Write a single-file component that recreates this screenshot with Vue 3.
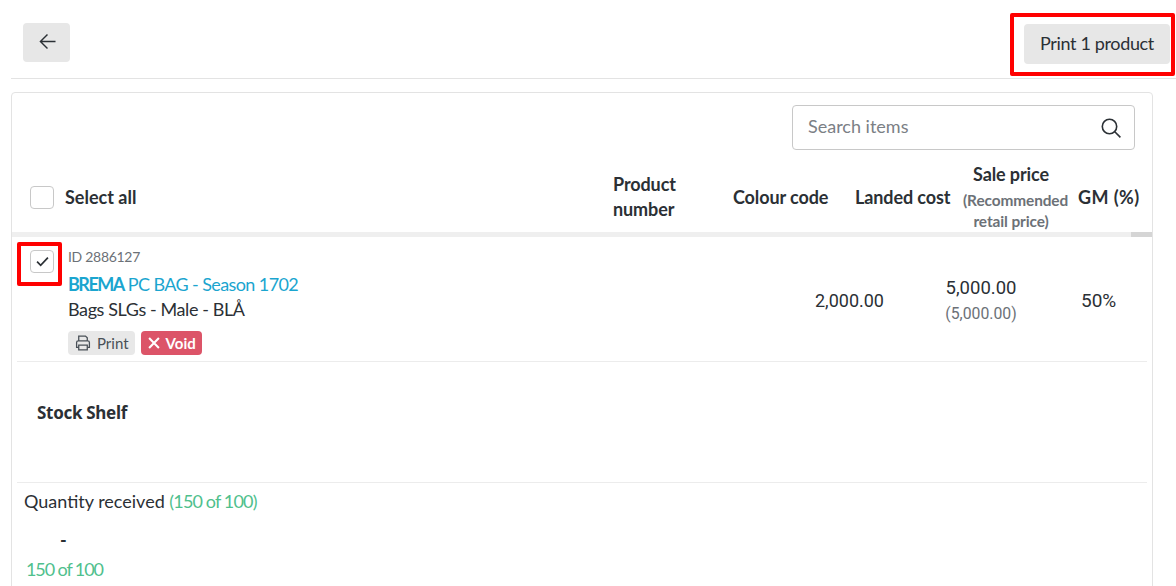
<script setup>
const columns = ['Colour code', 'Landed cost']
</script>

<template>
  <div class="page">
    <header class="topbar">
      <button class="btn back" aria-label="Back">
        <svg width="17" height="17" viewBox="0 0 18 18" fill="none" stroke="#2b3035" stroke-width="1.5">
          <path d="M17.500 9H1.500M9 1.500 1.500 9 9 16.500" />
        </svg>
      </button>
      <button class="btn print">Print 1 product</button>
      <span class="mark mark-print"></span>
    </header>

    <section class="card">
      <div class="search-row">
        <div class="search">
          <span>Search items</span>
          <svg width="22" height="22" viewBox="0 0 22 22" fill="none" stroke="#2b3035" stroke-width="1.6">
            <circle cx="9.500" cy="9.500" r="7.200" />
            <path d="m14.800 14.800 5.600 5.600" />
          </svg>
        </div>
      </div>

      <div class="thead">
        <div class="select-all">
          <span class="checkbox"></span>
          <strong>Select all</strong>
        </div>
        <div class="th product-number">Product number</div>
        <div v-for="c in columns" :key="c" class="th">{{ c }}</div>
        <div class="th sale">
          Sale price
          <small>(Recommended retail price)</small>
        </div>
        <div class="th gm-head">GM (%)</div>
      </div>

      <div class="scroll"><span></span></div>

      <div class="row">
        <span class="checkbox checked">
          <svg width="13" height="11" viewBox="0 0 12 10" fill="none" stroke="#2b3035" stroke-width="1.6">
            <path d="m1 5.200 3.300 3.300L11 1.500" />
          </svg>
        </span>
        <span class="mark mark-check"></span>
        <div class="item">
          <div class="id">ID 2886127</div>
          <div class="name"><b>BREMA</b> PC BAG - Season 1702</div>
          <div class="meta">Bags SLGs - Male - BLÅ</div>
          <div class="tags">
            <span class="tag tag-print">
              <svg width="16" height="16" viewBox="0 0 15 15" fill="none" stroke="#495057" stroke-width="1.200">
                <path d="M3.500 5.500V1h6.300l1.700 1.700v2.800M3.500 11.500h-2V7A1.500 1.500 0 0 1 3 5.500h9A1.500 1.500 0 0 1 13.500 7v4.500h-2" />
                <path d="M3.500 9.500h8V14h-8z" />
              </svg>
              Print
            </span>
            <span class="tag tag-void">
              <svg width="12" height="12" viewBox="0 0 11 11" fill="none" stroke="#fff" stroke-width="1.900">
                <path d="m1 1 9 9M10 1l-9 9" />
              </svg>
              Void
            </span>
          </div>
        </div>
        <div class="cost">2,000.00</div>
        <div class="price">5,000.00<small>(5,000.00)</small></div>
        <div class="gm">50%</div>
      </div>

      <div class="stock">Stock Shelf</div>

      <div class="quantity">
        <p>Quantity received <em>(150 of 100)</em></p>
        <div class="dash">-</div>
        <em class="count">150 of 100</em>
      </div>
    </section>
  </div>
</template>

<style>
html,
body {
  margin: 0;
  background: #fff;
  overflow: hidden;
}
</style>

<style scoped>
.page {
  width: 1176px;
  height: 586px;
  overflow: hidden;
  box-sizing: border-box;
  padding-left: 11px;
  font-family: Lato, "Noto Sans", sans-serif;
  color: #2b3035;
}
.topbar {
  position: relative;
  height: 79px;
  box-sizing: border-box;
  border-bottom: 1px solid #e3e3e3;
  display: flex;
  justify-content: space-between;
  align-items: flex-start;
  padding: 23px 6px 0 12px;
}
.btn {
  border: 0;
  border-radius: 4px;
  background: #e7e7e7;
  color: #2b3035;
  font: inherit;
  padding: 0;
}
.back {
  width: 47px;
  height: 39px;
  display: flex;
  align-items: center;
  justify-content: center;
  padding: 0 0 3px 1px;
}
.print {
  width: 146px;
  height: 40px;
  margin-top: 1px;
  padding-bottom: 2px;
  font-size: 18px;
  letter-spacing: -0.35px;
}
.mark {
  position: absolute;
  box-sizing: border-box;
  border: 4px solid #f00;
  border-radius: 2px;
}
.mark-print {
  left: 999px;
  top: 13px;
  width: 165px;
  height: 63px;
}
.card {
  margin-top: 13px;
  width: 1142px;
  height: 520px;
  box-sizing: border-box;
  border: 1px solid #e3e3e3;
  border-radius: 4px;
}
.search-row {
  display: flex;
  justify-content: flex-end;
  padding: 12px 17px 0 0;
}
.search {
  width: 343px;
  height: 45px;
  box-sizing: border-box;
  border: 1px solid #c8c8c8;
  border-radius: 4px;
  display: flex;
  align-items: center;
  justify-content: space-between;
  padding: 0 12px 0 15px;
  font-size: 18px;
  color: #7b8085;
}
.search span {
  margin-top: -3px;
}
.thead {
  height: 82px;
  box-sizing: border-box;
  padding-top: 12px;
  display: grid;
  grid-template-columns: 601px 120px 122px 100px 123px 1fr;
  align-items: center;
  font-size: 18px;
}
.select-all {
  display: flex;
  align-items: center;
  gap: 11px;
  padding-left: 18px;
}
.select-all strong {
  font-weight: 700;
}
.th {
  font-weight: 700;
  line-height: 25px;
  white-space: nowrap;
  letter-spacing: -0.1px;
}
.product-number {
  width: 80px;
  white-space: normal;
}
.sale {
  text-align: center;
  line-height: 22px;
  white-space: normal;
  margin: 0 19px 0 8px;
}
.sale small {
  display: block;
  font-size: 15.400px;
  color: #6c7177;
  line-height: 21px;
  margin-top: 5px;
}
.gm-head {
  letter-spacing: 0.4px;
}
.checkbox {
  width: 24px;
  height: 23px;
  box-sizing: border-box;
  border: 1px solid #c8c8c8;
  border-radius: 4px;
  background: #fff;
  display: flex;
  align-items: center;
  justify-content: center;
  flex: none;
}
.scroll {
  height: 5px;
  background: #efefef;
  display: flex;
  justify-content: flex-end;
}
.scroll span {
  width: 21px;
  background: #d5d5d5;
}
.row {
  position: relative;
  margin-right: 5px;
  margin-left: 5px;
  height: 125px;
  box-sizing: border-box;
  border-bottom: 1px solid #ececec;
  display: grid;
  grid-template-columns: 51px 1fr 110px 194px 68px;
  align-items: center;
}
.row > .checkbox {
  align-self: start;
  margin: 13px 0 0 13px;
}
.mark-check {
  left: 0;
  top: 5px;
  width: 45px;
  height: 44px;
}
.item {
  align-self: start;
  padding-top: 11px;
}
.id {
  font-size: 14px;
  line-height: 18px;
  color: #6c7177;
  letter-spacing: -0.3px;
}
.name {
  font-size: 18px;
  line-height: 25px;
  margin-top: 6px;
  color: #1ba5cf;
  letter-spacing: -0.6px;
}
.name b {
  font-weight: 700;
  letter-spacing: -1.500px;
}
.meta {
  font-size: 18px;
  line-height: 25px;
  letter-spacing: -0.4px;
}
.tags {
  display: flex;
  gap: 6px;
  margin-top: 9px;
}
.tag {
  height: 24px;
  border-radius: 4px;
  display: flex;
  align-items: center;
  gap: 6px;
  padding: 0 6px 0 7px;
  font-size: 15px;
  box-sizing: border-box;
}
.tag-print {
  background: #e8e8e8;
  color: #495057;
}
.tag-void {
  background: #dc5468;
  color: #fff;
  font-weight: 700;
}
.cost,
.price,
.gm {
  font-family: Roboto, sans-serif;
  font-size: 18px;
  white-space: nowrap;
  padding-top: 3px;
}
.cost {
  text-align: right;
  padding-right: 1px;
}
.price {
  font-size: 18.500px;
  line-height: 24px;
  text-align: center;
  padding: 0 2px 0 0;
  margin-top: 4px;
}
.price small {
  display: block;
  font-size: 15.800px;
  color: #6c7177;
  line-height: 27px;
}
.gm {
  font-size: 19px;
  padding-left: 2px;
}
.stock {
  margin-left: 25px;
  height: 120px;
  box-sizing: border-box;
  padding-top: 39px;
  font-family: "Noto Sans", sans-serif;
  font-size: 17px;
  font-weight: 700;
  line-height: 24px;
  letter-spacing: -0.3px;
}
.quantity {
  margin: 0 5px 0 5px;
  border-top: 1px solid #ececec;
  padding-left: 7px;
  font-size: 18px;
}
.quantity p {
  margin: 6px 0 0;
  line-height: 24px;
}
.quantity em {
  font-style: normal;
  color: #4fc08d;
  letter-spacing: -0.85px;
}
.dash {
  padding-left: 36px;
  margin-top: 15px;
  line-height: 24px;
  font-weight: 700;
}
.quantity .count {
  display: block;
  margin: 5px 0 0 2px;
  line-height: 24px;
  letter-spacing: -1.100px;
}
</style>
